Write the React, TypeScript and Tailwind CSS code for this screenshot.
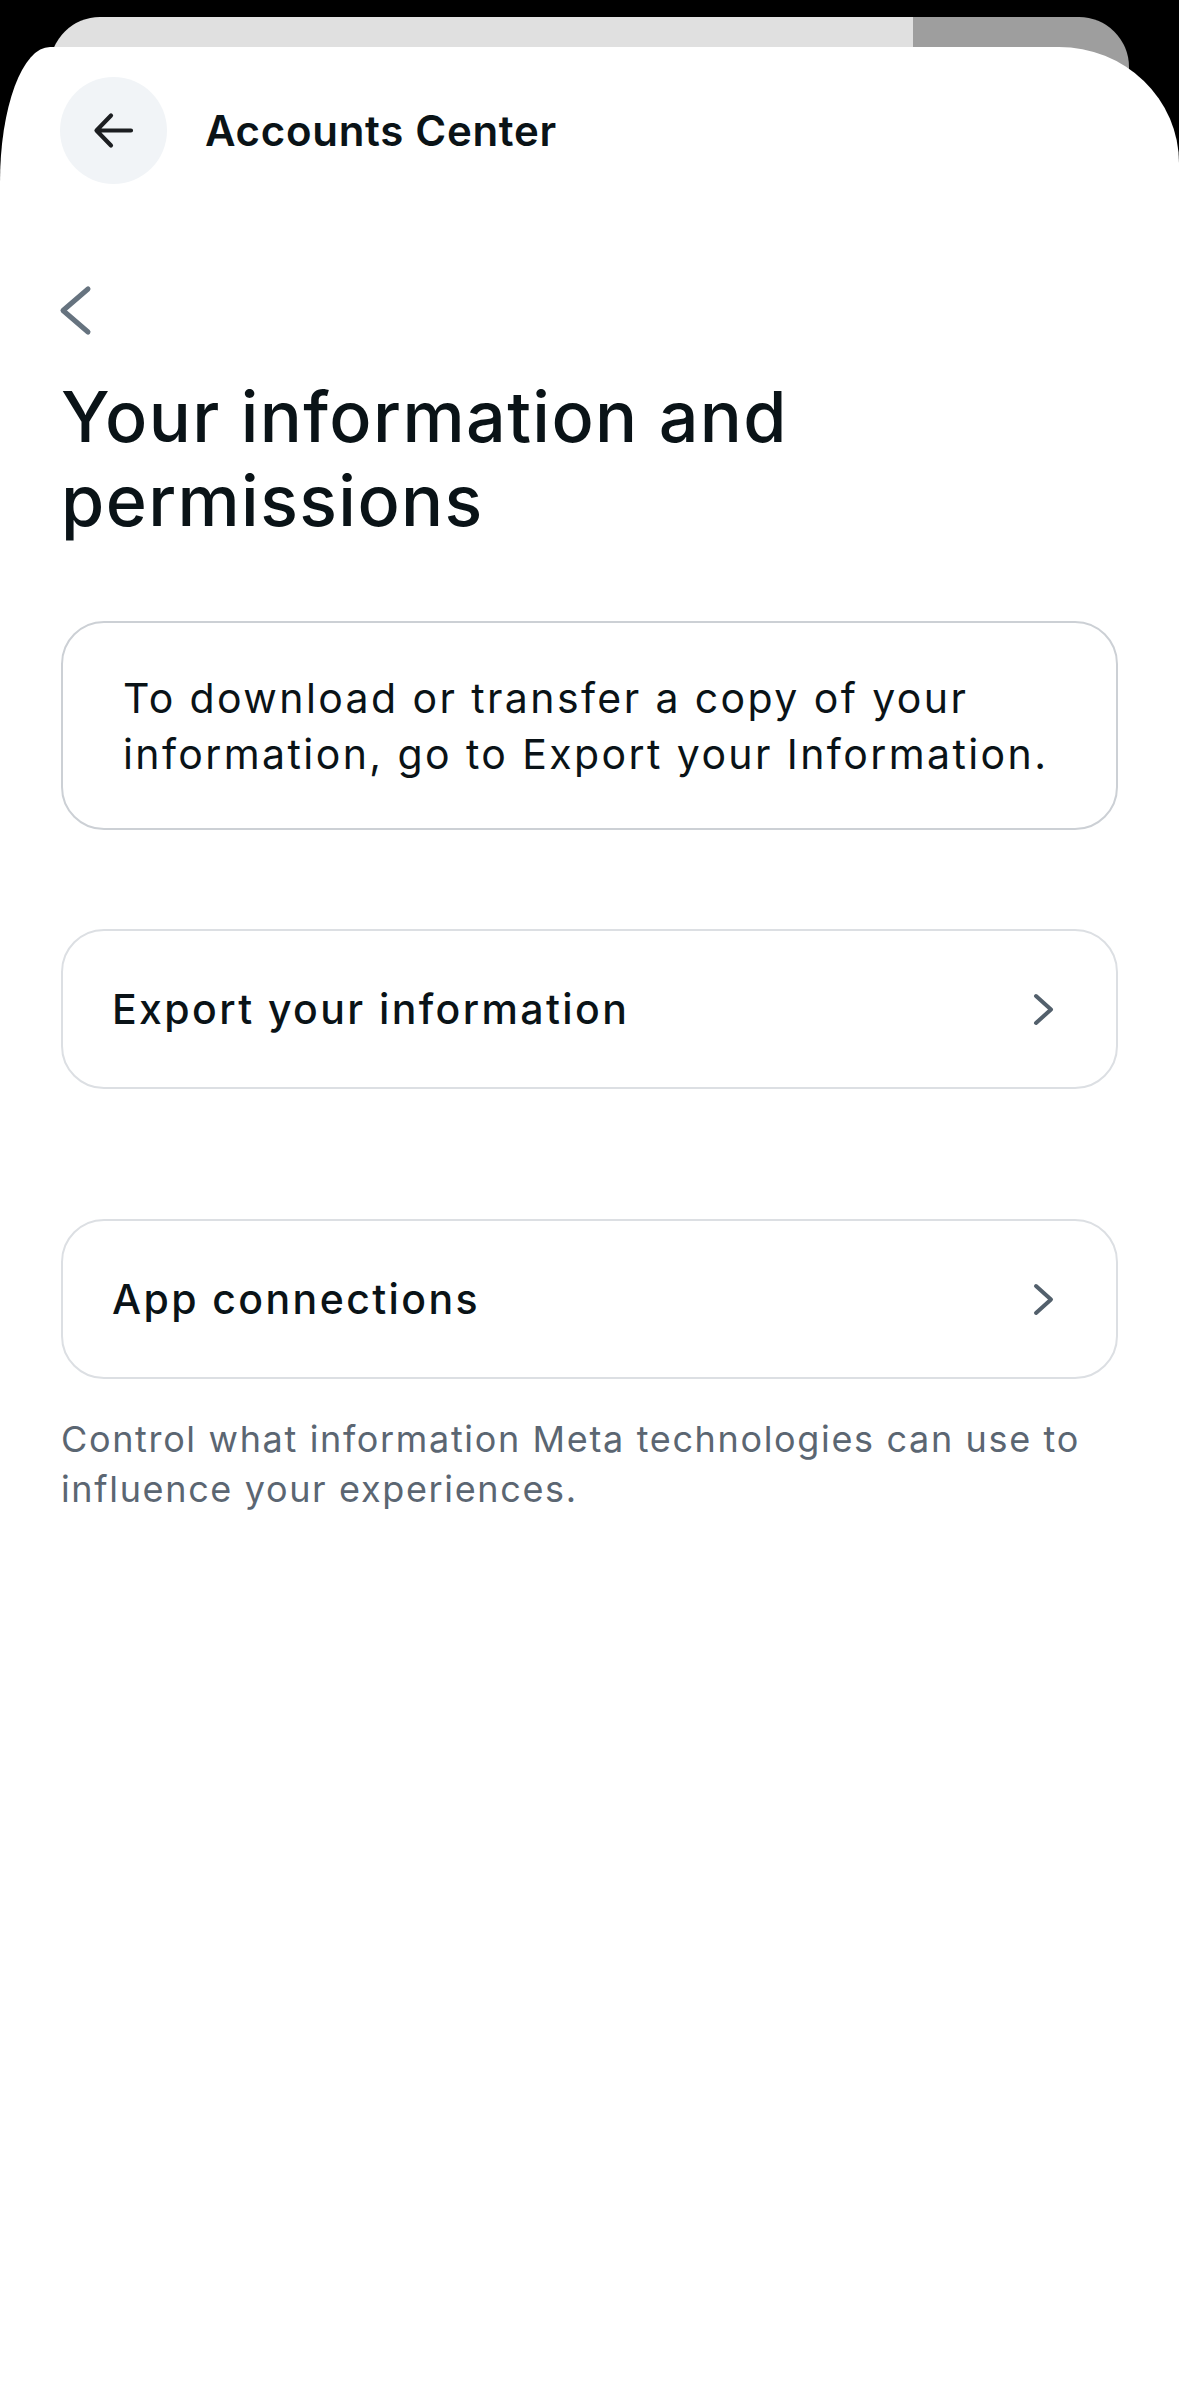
import React from "react";

const font = { fontFamily: "Inter, 'Noto Sans', sans-serif" };

const ChevronRight = () => (
  <svg width="22" height="33" viewBox="0 0 22 33" fill="none">
    <path d="M3 3 L18 16.5 L3 30" stroke="#53606c" strokeWidth="4" strokeLinecap="round" strokeLinejoin="round" />
  </svg>
);

interface RowProps {
  label: string;
}

const LinkRow = ({ label }: RowProps) => (
  <div className="mx-[61px] flex h-[160px] items-center justify-between rounded-[43px] border-2 border-[#dcdfe3] pl-[49px] pr-[61px]">
    <span className="text-[41px] font-medium leading-[56px] tracking-[2.4px] text-[#0a1317]">{label}</span>
    <ChevronRight />
  </div>
);

export default function App() {
  return (
    <div className="flex h-[2396px] flex-col overflow-hidden bg-black" style={font}>
      {/* card peeking behind the sheet */}
      <div className="mx-[50px] mt-[17px] flex h-[90px] shrink-0 overflow-hidden rounded-t-[50px]">
        <div className="w-[863px] bg-[#e0e0e0]" />
        <div className="flex-1 bg-[#9e9e9e]" />
      </div>

      <div className="relative -mt-[60px] flex-1 rounded-tl-[50px_135px] rounded-tr-[120px_116px] bg-white">
        <div className="flex items-center pl-[60px] pt-[30px]">
          <button className="flex h-[107px] w-[107px] items-center justify-center rounded-full bg-[#f1f4f7]">
            <svg width="41" height="37" viewBox="0 0 41 37" fill="none">
              <path d="M38 18.5 H4 M18 3.5 L3.5 18.5 L18 33.5" stroke="#1c1e21" strokeWidth="4.2" strokeLinecap="round" strokeLinejoin="round" />
            </svg>
          </button>
          <span className="ml-[38px] text-[42px] font-semibold tracking-[0.7px] text-[#0a1317]">Accounts Center</span>
        </div>

        <div className="ml-[58px] mt-[101px]">
          <svg width="34" height="51" viewBox="0 0 34 51" fill="none">
            <path d="M30 4 L5 25.5 L30 47" stroke="#66737f" strokeWidth="5" strokeLinecap="round" strokeLinejoin="round" />
          </svg>
        </div>

        <h1 className="ml-[61px] mt-[39px] text-[70px] font-medium leading-[84px] tracking-[1.4px] text-[#0a1317]">
          Your information and
          <br />
          permissions
        </h1>

        <div className="mx-[61px] mt-[78px] flex h-[209px] items-center rounded-[43px] border-2 border-[#ccd0d5] pl-[60px] pr-[30px]">
          <p className="text-[41px] leading-[56px] tracking-[2.4px] text-[#0a1317]">
            To download or transfer a copy of your information, go to Export your Information.
          </p>
        </div>

        <div className="mt-[99px]">
          <LinkRow label="Export your information" />
        </div>

        <div className="mt-[130px]">
          <LinkRow label="App connections" />
        </div>

        <p className="ml-[61px] mr-[60px] mt-[35px] text-[36px] leading-[50px] tracking-[1.65px] text-[#5b6672]">
          Control what information Meta technologies can use to influence your experiences.
        </p>
      </div>
    </div>
  );
}
